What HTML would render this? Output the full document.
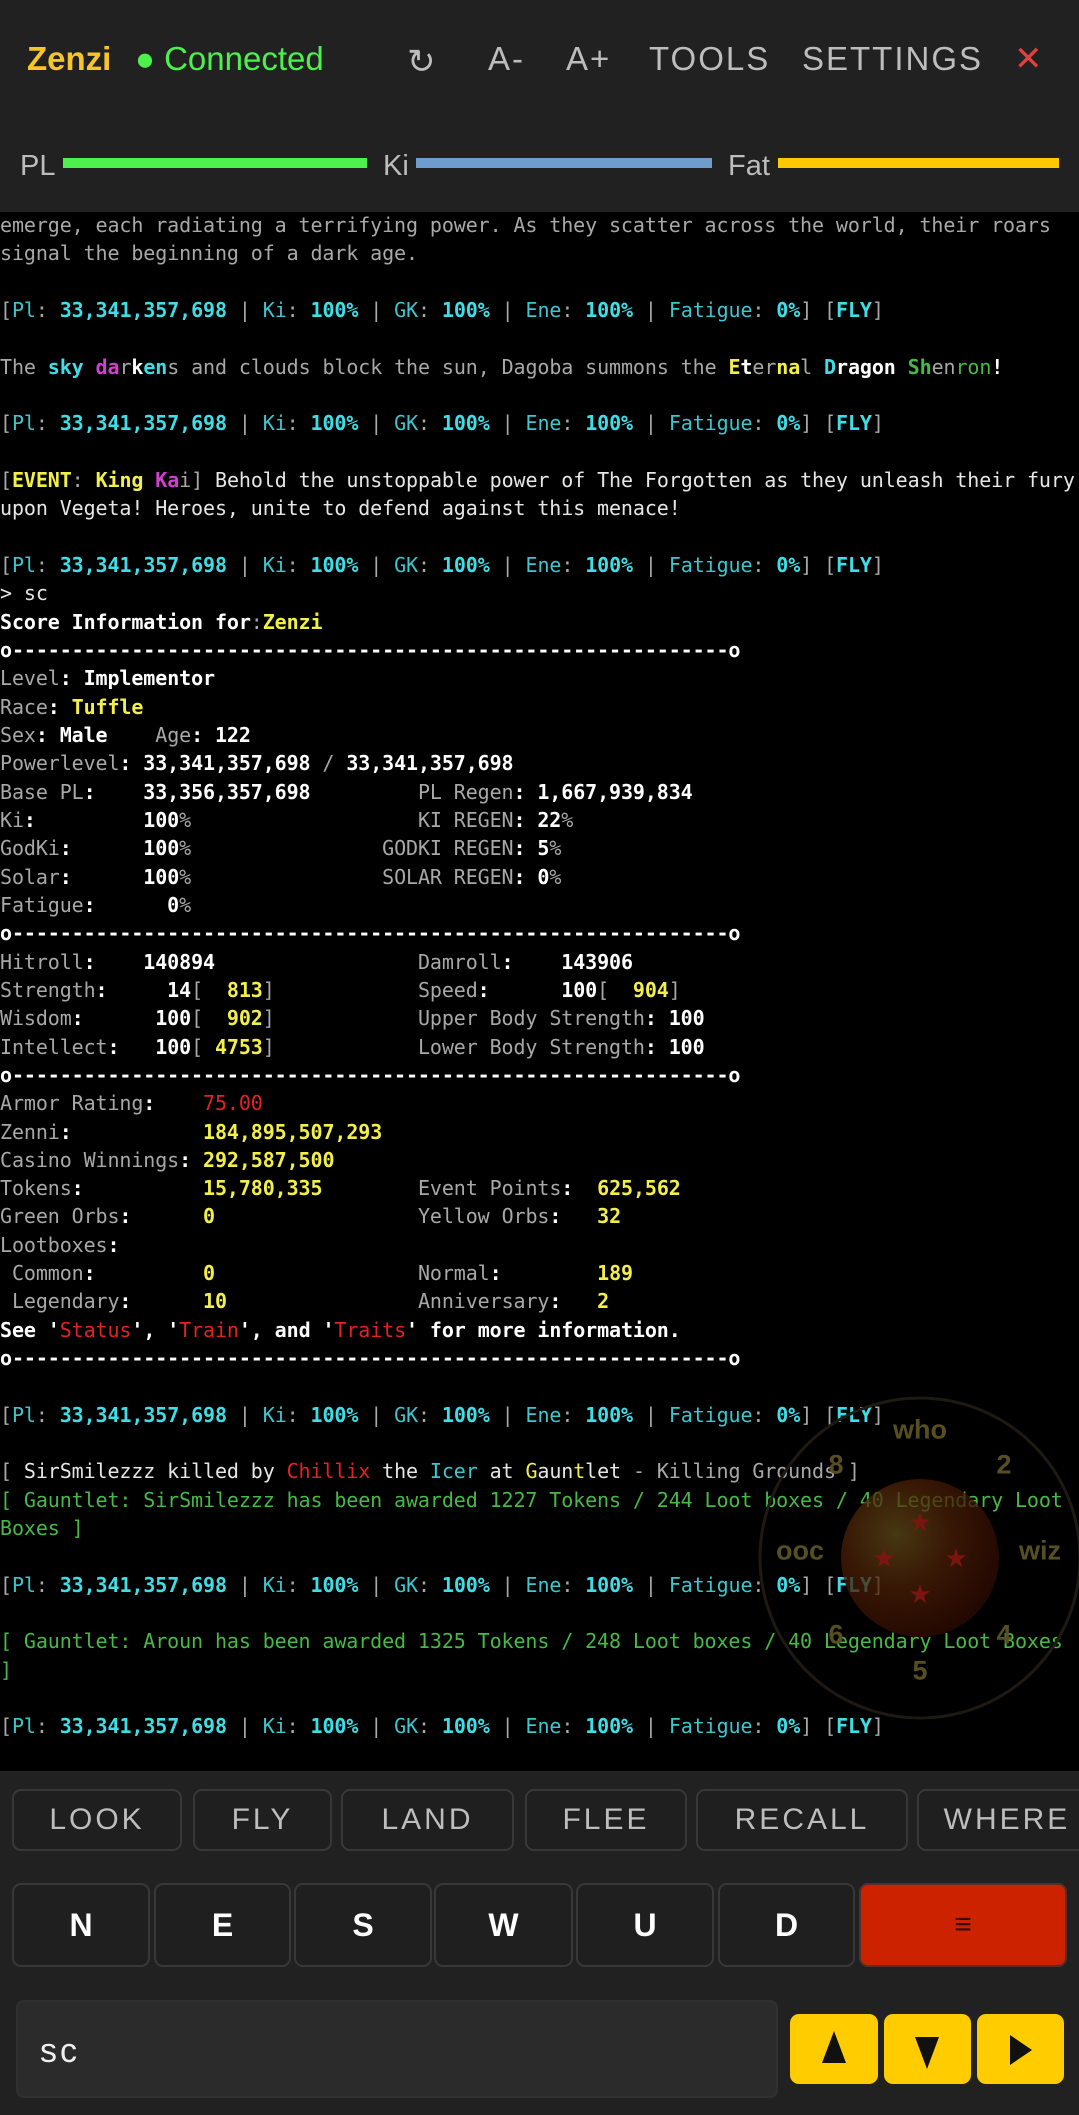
<!DOCTYPE html>
<html><head><meta charset="utf-8"><style>
*{margin:0;padding:0;box-sizing:border-box}
body{width:1079px;height:2115px;background:#000;position:relative;overflow:hidden;font-family:"Liberation Sans",sans-serif}
#hdr{position:absolute;left:0;top:0;width:1079px;height:212px;background:#212121}
.t{position:absolute;top:37px;font-size:33px;line-height:44px;color:#bdbdbd;letter-spacing:2px}
.bl{position:absolute;top:148px;font-size:29px;line-height:36px;color:#bdbdbd}
.bar{position:absolute;top:158px;height:10px}
pre{position:absolute;left:0;top:211px;font-family:"DejaVu Sans Mono","Liberation Mono",monospace;font-size:20px;line-height:28.33px;color:#a8a8a8;white-space:pre;letter-spacing:-0.1px}
.g{color:#a8a8a8}.w{color:#fff;font-weight:bold}.wn{color:#e6e6e6}.c{color:#3fdde6;font-weight:bold}.cn{color:#3cc6ce}
.y{color:#f3ef4a;font-weight:bold}.gr{color:#46b946}.r{color:#e52222}.m{color:#d23fd2;font-weight:bold}
#bot{position:absolute;left:0;top:1771px;width:1079px;height:344px;background:#212121}
.b1{position:absolute;top:1789px;height:62px;border:2px solid #383838;border-radius:9px;background:#1f1f1f;color:#bdbdbd;font-size:30px;line-height:58px;text-align:center;letter-spacing:3px}
.b2{position:absolute;top:1883px;height:84px;border:2px solid #383838;border-radius:9px;background:#1f1f1f;color:#fff;font-weight:bold;font-size:32px;line-height:80px;text-align:center}
.yb{position:absolute;top:2014px;height:70px;background:#ffcc00;border-radius:9px}
.ov{position:absolute;font-weight:bold;font-size:27px;color:#574f22;transform:translate(-50%,-50%)}
</style></head><body>
<div id="hdr"></div>
<div class="t" style="left:27px;color:#f7c429;font-weight:bold;letter-spacing:0">Zenzi</div>
<div class="t" style="left:135px;color:#4df04d;letter-spacing:0">● Connected</div>
<div class="t" style="left:407px;top:40px;font-size:34px">↻</div>
<div class="t" style="left:488px">A-</div>
<div class="t" style="left:566px">A+</div>
<div class="t" style="left:649px">TOOLS</div>
<div class="t" style="left:802px">SETTINGS</div>
<div class="t" style="left:1014px;color:#e04040;font-size:34px">✕</div>
<div class="bl" style="left:20px">PL</div><div class="bar" style="left:63px;width:304px;background:#4df04d"></div>
<div class="bl" style="left:383px">Ki</div><div class="bar" style="left:416px;width:296px;background:#6e9ccc"></div>
<div class="bl" style="left:728px">Fat</div><div class="bar" style="left:778px;width:281px;background:#ffc800"></div>
<pre>emerge, each radiating a terrifying power. As they scatter across the world, their roars
signal the beginning of a dark age.

[<span class="cn">Pl</span>: <span class="c">33,341,357,698</span> | <span class="cn">Ki</span>: <span class="c">100%</span> | <span class="cn">GK</span>: <span class="c">100%</span> | <span class="cn">Ene</span>: <span class="c">100%</span> | <span class="cn">Fatigue</span>: <span class="c">0%</span>] [<span class="c">FLY</span>]

The <span class="c">sky</span> <span class="m">da</span>r<span class="w">k</span><span class="c">en</span>s and clouds block the sun, Dagoba summons the <span class="y">E</span><span class="w">t</span>er<span class="y">na</span>l <span class="c">D</span><span class="w">ragon</span> <span class="gr" style="font-weight:bold">Sh</span>en<span class="gr">ron</span><span class="w">!</span>

[<span class="cn">Pl</span>: <span class="c">33,341,357,698</span> | <span class="cn">Ki</span>: <span class="c">100%</span> | <span class="cn">GK</span>: <span class="c">100%</span> | <span class="cn">Ene</span>: <span class="c">100%</span> | <span class="cn">Fatigue</span>: <span class="c">0%</span>] [<span class="c">FLY</span>]

[<span class="y">EVENT</span>: <span class="y">King</span> <span class="m">Ka</span>i]<span class="wn"> Behold the unstoppable power of The Forgotten as they unleash their fury
upon Vegeta! Heroes, unite to defend against this menace!</span>

[<span class="cn">Pl</span>: <span class="c">33,341,357,698</span> | <span class="cn">Ki</span>: <span class="c">100%</span> | <span class="cn">GK</span>: <span class="c">100%</span> | <span class="cn">Ene</span>: <span class="c">100%</span> | <span class="cn">Fatigue</span>: <span class="c">0%</span>] [<span class="c">FLY</span>]
<span class="wn">&gt; sc</span>
<span class="w">Score Information for</span>:<span class="y">Zenzi</span>
<span class="w">o------------------------------------------------------------o</span>
Level<span class="w">: Implementor</span>
Race<span class="w">: </span><span class="y">Tuffle</span>
Sex<span class="w">: Male</span>    Age<span class="w">: 122</span>
Powerlevel<span class="w">: 33,341,357,698</span> / <span class="w">33,341,357,698</span>
Base PL<span class="w">:    33,356,357,698</span>         PL Regen<span class="w">: 1,667,939,834</span>
Ki<span class="w">:         100</span>%                   KI REGEN<span class="w">: 22</span>%
GodKi<span class="w">:      100</span>%                GODKI REGEN<span class="w">: 5</span>%
Solar<span class="w">:      100</span>%                SOLAR REGEN<span class="w">: 0</span>%
Fatigue<span class="w">:      0</span>%
<span class="w">o------------------------------------------------------------o</span>
Hitroll<span class="w">:    140894</span>                 Damroll<span class="w">:    143906</span>
Strength<span class="w">:     14</span>[  <span class="y">813</span>]            Speed<span class="w">:      100</span>[  <span class="y">904</span>]
Wisdom<span class="w">:      100</span>[  <span class="y">902</span>]            Upper Body Strength<span class="w">: 100</span>
Intellect<span class="w">:   100</span>[ <span class="y">4753</span>]            Lower Body Strength<span class="w">: 100</span>
<span class="w">o------------------------------------------------------------o</span>
Armor Rating<span class="w">:</span>    <span class="r">75.00</span>
Zenni<span class="w">:</span>           <span class="y">184,895,507,293</span>
Casino Winnings<span class="w">:</span> <span class="y">292,587,500</span>
Tokens<span class="w">:</span>          <span class="y">15,780,335</span>        Event Points<span class="w">:</span>  <span class="y">625,562</span>
Green Orbs<span class="w">:</span>      <span class="y">0</span>                 Yellow Orbs<span class="w">:</span>   <span class="y">32</span>
Lootboxes<span class="w">:</span>
 Common<span class="w">:</span>         <span class="y">0</span>                 Normal<span class="w">:</span>        <span class="y">189</span>
 Legendary<span class="w">:</span>      <span class="y">10</span>                Anniversary<span class="w">:</span>   <span class="y">2</span>
<span class="w">See '</span><span class="r">Status</span><span class="w">', '</span><span class="r">Train</span><span class="w">', and '</span><span class="r">Traits</span><span class="w">' for more information.</span>
<span class="w">o------------------------------------------------------------o</span>

[<span class="cn">Pl</span>: <span class="c">33,341,357,698</span> | <span class="cn">Ki</span>: <span class="c">100%</span> | <span class="cn">GK</span>: <span class="c">100%</span> | <span class="cn">Ene</span>: <span class="c">100%</span> | <span class="cn">Fatigue</span>: <span class="c">0%</span>] [<span class="c">FLY</span>]

[ <span class="wn">SirSmilezzz killed by </span><span class="r">Chillix</span><span class="wn"> the </span><span class="cn">Icer</span><span class="wn"> at </span><span class="y" style="font-weight:normal">G</span><span class="wn">aun</span><span class="y" style="font-weight:normal">t</span><span class="wn">let</span> - Killing Grounds ]
<span class="gr">[ Gauntlet: SirSmilezzz has been awarded 1227 Tokens / 244 Loot boxes / 40 Legendary Loot
Boxes ]</span>

[<span class="cn">Pl</span>: <span class="c">33,341,357,698</span> | <span class="cn">Ki</span>: <span class="c">100%</span> | <span class="cn">GK</span>: <span class="c">100%</span> | <span class="cn">Ene</span>: <span class="c">100%</span> | <span class="cn">Fatigue</span>: <span class="c">0%</span>] [<span class="c">FLY</span>]

<span class="gr">[ Gauntlet: Aroun has been awarded 1325 Tokens / 248 Loot boxes / 40 Legendary Loot Boxes
]</span>

[<span class="cn">Pl</span>: <span class="c">33,341,357,698</span> | <span class="cn">Ki</span>: <span class="c">100%</span> | <span class="cn">GK</span>: <span class="c">100%</span> | <span class="cn">Ene</span>: <span class="c">100%</span> | <span class="cn">Fatigue</span>: <span class="c">0%</span>] [<span class="c">FLY</span>]</pre>
<svg style="position:absolute;left:0;top:0" width="1079" height="2115">
<defs><radialGradient id="db" cx="0.35" cy="0.35" r="0.7"><stop offset="0" stop-color="#5e4a18"/><stop offset="0.5" stop-color="#4a1e06"/><stop offset="1" stop-color="#2e0a02"/></radialGradient></defs>
<circle cx="920" cy="1558" r="160" fill="none" stroke="#1e1a12" stroke-width="3"/>
<circle cx="920" cy="1558" r="79" fill="url(#db)" opacity="0.75"/>
<g fill="#7a1610" font-size="26" text-anchor="middle" font-family="DejaVu Sans,sans-serif">
<text x="920" y="1531">★</text><text x="884" y="1567">★</text><text x="956" y="1567">★</text><text x="920" y="1603">★</text></g>
</svg>
<div class="ov" style="left:920px;top:1430px">who</div>
<div class="ov" style="left:836px;top:1465px">8</div>
<div class="ov" style="left:1004px;top:1465px">2</div>
<div class="ov" style="left:800px;top:1551px">ooc</div>
<div class="ov" style="left:1040px;top:1551px">wiz</div>
<div class="ov" style="left:836px;top:1635px">6</div>
<div class="ov" style="left:1004px;top:1635px">4</div>
<div class="ov" style="left:920px;top:1671px">5</div>
<div id="bot"></div>
<div class="b1" style="left:12px;width:170px">LOOK</div>
<div class="b1" style="left:193px;width:139px">FLY</div>
<div class="b1" style="left:341px;width:173px">LAND</div>
<div class="b1" style="left:525px;width:162px">FLEE</div>
<div class="b1" style="left:696px;width:212px">RECALL</div>
<div class="b1" style="left:917px;width:180px">WHERE</div>
<div class="b2" style="left:12px;width:138px">N</div>
<div class="b2" style="left:154px;width:137px">E</div>
<div class="b2" style="left:294px;width:138px">S</div>
<div class="b2" style="left:434px;width:139px">W</div>
<div class="b2" style="left:576px;width:138px">U</div>
<div class="b2" style="left:718px;width:137px">D</div>
<div class="b2" style="left:859px;width:208px;background:#cc2200;border-color:#55302a;color:#3a0a00;font-size:30px">≡</div>
<div style="position:absolute;left:16px;top:2000px;width:762px;height:98px;background:#2b2b2b;border:2px solid #303030;border-radius:8px;color:#eee;font-size:34px;line-height:98px;padding-left:22px;letter-spacing:3px">sc</div>
<div class="yb" style="left:790px;width:88px"></div>
<div class="yb" style="left:884px;width:87px"></div>
<div class="yb" style="left:977px;width:87px"></div>
<svg style="position:absolute;left:0;top:0;pointer-events:none" width="1079" height="2115">
<polygon points="834,2031 822,2063 846,2063" fill="#111"/>
<polygon points="915,2037 939,2037 927,2069" fill="#111"/>
<polygon points="1010,2035 1032,2050 1010,2065" fill="#111"/>
</svg>
</body></html>
